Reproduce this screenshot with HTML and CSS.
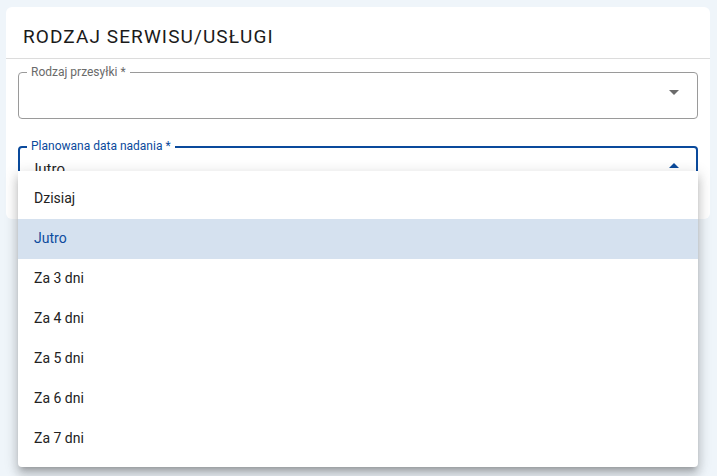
FILE: index.html
```html
<!DOCTYPE html>
<html lang="pl">
<head>
<meta charset="utf-8">
<link rel="stylesheet" href="styles.css">
</head>
<body>
<div class="card">
  <div class="card-header">
    <h2 class="title">RODZAJ SERWISU/USŁUGI</h2>
  </div>
  <div class="card-body">
    <div class="field">
      <span class="field-label">Rodzaj przesyłki *</span>
      <span class="field-value"></span>
      <svg class="arrow" width="10" height="5" viewBox="0 0 10 5"><path d="M0 0h10L5 5z" fill="#6b6b6b"/></svg>
    </div>
    <div class="field field-focused">
      <span class="field-label">Planowana data nadania *</span>
      <span class="field-value">Jutro</span>
      <svg class="arrow" width="10" height="5" viewBox="0 0 10 5"><path d="M0 5h10L5 0z" fill="#0a4a9c"/></svg>
      <ul class="menu">
        <li class="option">Dzisiaj</li>
        <li class="option selected">Jutro</li>
        <li class="option">Za 3 dni</li>
        <li class="option">Za 4 dni</li>
        <li class="option">Za 5 dni</li>
        <li class="option">Za 6 dni</li>
        <li class="option">Za 7 dni</li>
      </ul>
    </div>
  </div>
</div>
</body>
</html>
```
FILE: styles.css
```css
html, body {
  margin: 0;
  padding: 0;
}
body {
  background: #eff5fa;
  font-family: Roboto, "Liberation Sans", sans-serif;
  color: #1f1f1f;
  padding: 7px 7px 0 6px;
  height: 476px;
  box-sizing: border-box;
  overflow: hidden;
}
.card {
  background: #fff;
  border-radius: 6px;
  width: 704px;
  height: 212px;
  box-sizing: border-box;
}
.card-header {
  height: 52px;
  border-bottom: 1px solid #dcdcdc;
  box-sizing: border-box;
  padding: 19px 0 0 17px;
}
.title {
  margin: 0;
  font-size: 19px;
  font-weight: 400;
  letter-spacing: 1.1px;
  line-height: 22px;
  color: #1a1a1a;
}
.card-body {
  padding: 13px 12px 0 12px;
  display: flex;
  flex-direction: column;
  gap: 27px;
}
.field {
  position: relative;
  height: 47px;
  border: 1px solid #9a9a9a;
  border-radius: 4px;
  box-sizing: border-box;
  width: 680px;
}
.field-label {
  position: absolute;
  left: 8px;
  top: -8px;
  padding: 0 4px;
  background: #fff;
  font-size: 12px;
  line-height: 14px;
  color: #6a6a6a;
}
.field-value {
  position: absolute;
  left: 11px;
  top: 13px;
  font-size: 15px;
  line-height: 18px;
}
.arrow {
  position: absolute;
  right: 18px;
  top: 17px;
}
.field-focused {
  border: 2px solid #0a4a9c;
}
.field-focused .field-label {
  color: #0a4a9c;
  left: 7px;
  top: -9px;
}
.field-focused .field-value {
  left: 10px;
  top: 12px;
}
.field-focused .arrow {
  right: 17px;
  top: 15px;
}
.menu {
  position: absolute;
  left: -2px;
  top: 23px;
  width: 680px;
  margin: 0;
  padding: 8px 0;
  list-style: none;
  background: #fff;
  border-radius: 0 0 4px 4px;
  box-shadow: 0 5px 5px -3px rgba(0,0,0,0.2), 0 8px 10px 1px rgba(0,0,0,0.14), 0 3px 14px 2px rgba(0,0,0,0.12);
  z-index: 10;
}
.option {
  height: 40px;
  line-height: 39px;
  padding-left: 16px;
  font-size: 14px;
  color: #222;
}
.option.selected {
  background: #d5e1ef;
  color: #0d4b9e;
}
```
